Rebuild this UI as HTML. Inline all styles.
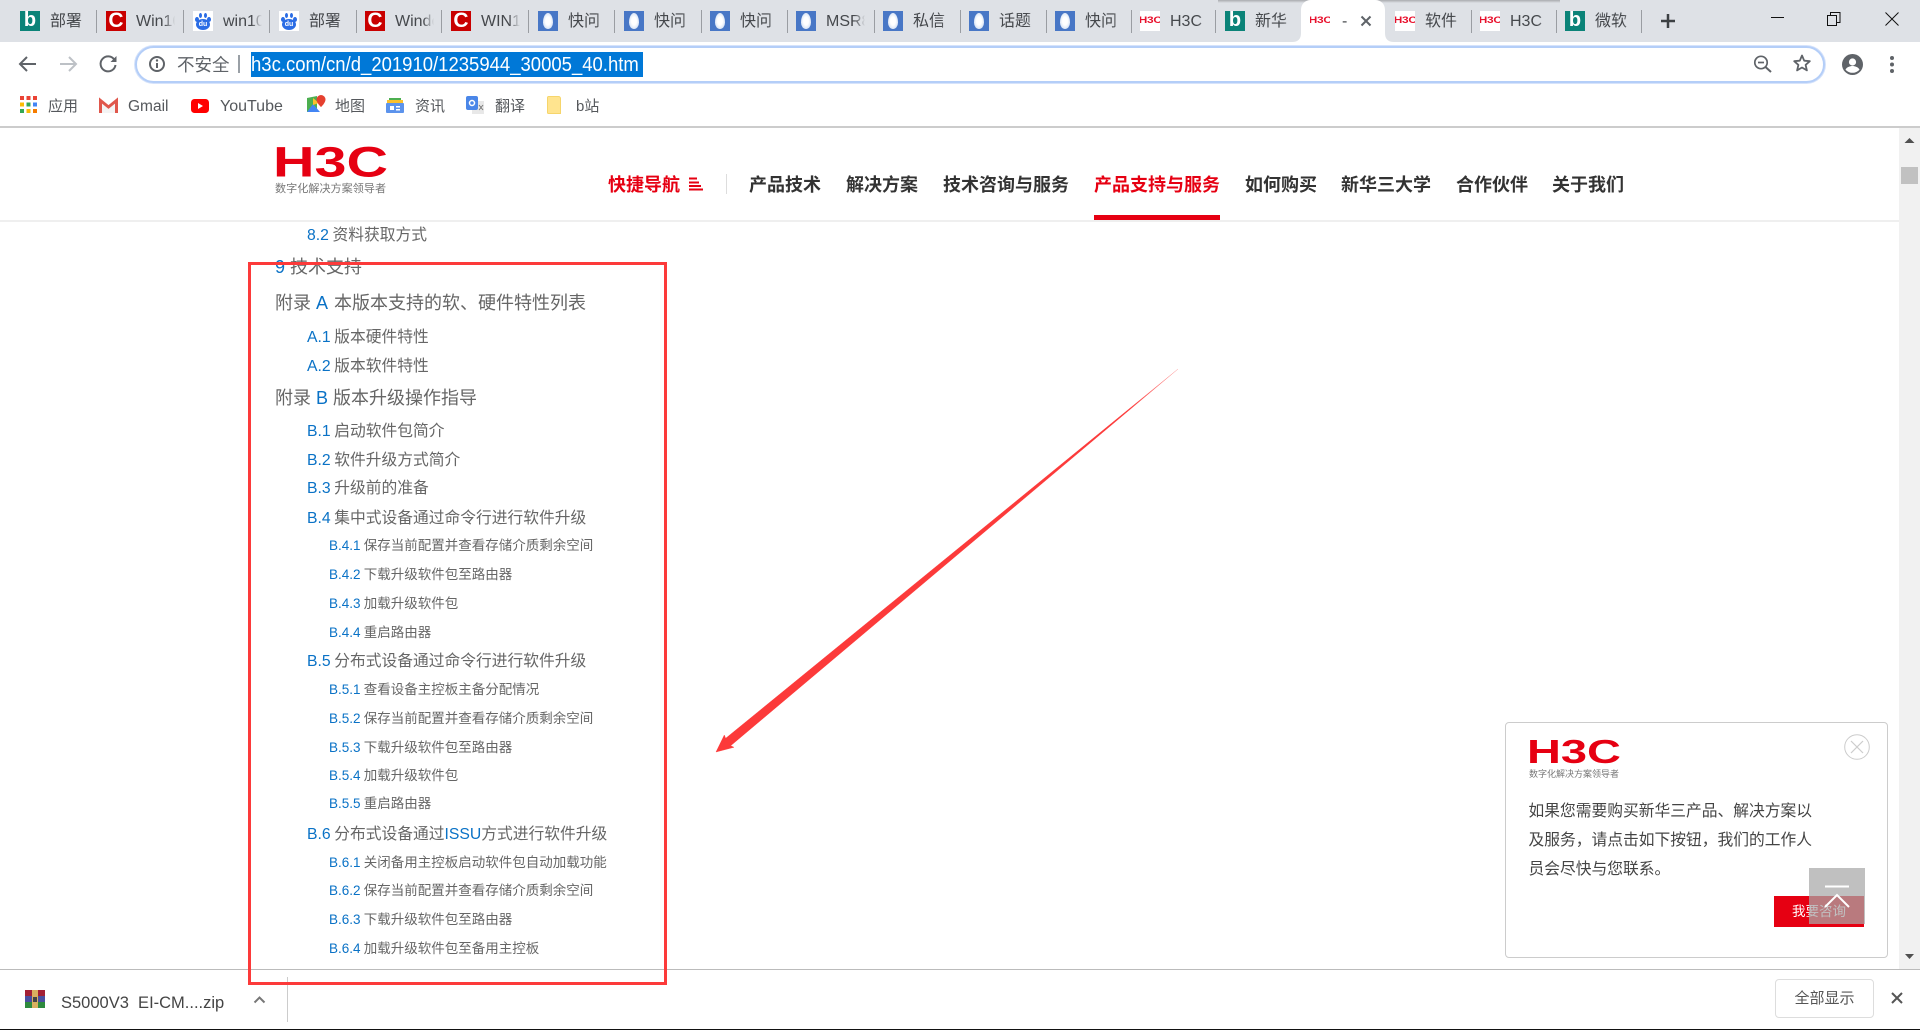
<!DOCTYPE html>
<html lang="zh-CN"><head><meta charset="utf-8"><title>H3C</title>
<style>
html,body{margin:0;padding:0;width:1920px;height:1030px;overflow:hidden;background:#fff}
body{position:relative;font-family:"Liberation Sans","Noto Sans CJK SC",sans-serif;color:#444}
.a,.a *{box-sizing:border-box}
.a{position:absolute;white-space:nowrap}
svg{position:absolute;overflow:visible}
#strip{left:0;top:0;width:1920px;height:42px;background:#dee1e6}
#shadow{left:1218px;top:0;width:342px;height:3px;background:linear-gradient(#a9abaf,#dee1e6)}
.sep{position:absolute;top:10px;width:1px;height:23px;background:#9a9da2}
.tab{position:absolute;top:11px;height:20px;width:70px}
.tab span{position:absolute;left:30px;top:-1px;width:39px;height:24px;line-height:24px;font-size:16px;color:#45484c;overflow:hidden;-webkit-mask-image:linear-gradient(to right,#000 72%,transparent 100%);mask-image:linear-gradient(to right,#000 72%,transparent 100%)}
.f{position:absolute;left:0;top:0;width:20px;height:20px;display:block;overflow:hidden;font-style:normal;text-align:center}
.bing{background:#0b8378;color:#fff;font:bold 20px/19px "Liberation Sans",sans-serif}
.csdn{background:#c90000;color:#fff;font:bold 21px/20px "Liberation Sans",sans-serif}
.baidu{background:#fff}
.baidu b{position:absolute;background:#2b6de5;border-radius:50%}
.baidu em{position:absolute;left:0;right:0;top:10px;font:bold 7px/8px "Liberation Sans",sans-serif;color:#fff;text-align:center;z-index:1}
.drop{background:#4877c6}
.drop b{position:absolute;left:5px;top:2px;width:10px;height:16px;border-radius:50% 50% 50% 50%/60% 60% 40% 40%;background:radial-gradient(#fff 35%,#bcd0ee 100%)}
.h3c{background:#fff;color:#e8112d;font:bold 9.5px/20px "Liberation Sans",sans-serif;letter-spacing:-.2px}
.h3c u{text-decoration:none;display:inline-block;transform:scaleX(1.25)}
#tool{left:0;top:42px;width:1920px;height:85px;background:#fff}
#line1{left:0;top:126px;width:1920px;height:2px;background:#ccc}
#omni{left:135px;top:46px;width:1690px;height:37px;border:2px solid #b4cef8;border-radius:19px;background:#fff;box-shadow:0 0 0 1px #d6e3fb}
.tx{position:absolute;white-space:nowrap}
.bm{position:absolute;top:95px;height:24px;line-height:24px;font-size:15px;color:#55585c;white-space:nowrap}
.nav{position:absolute;top:172px;height:26px;line-height:26px;font-size:18px;font-weight:bold;color:#333;white-space:nowrap}
.red{color:#e60012}
.l1,.l2,.l3{position:absolute;white-space:nowrap;height:24px;line-height:24px;color:#666}
.l1 b,.l2 b,.l3 b{font-weight:normal;color:#0a72c6}
.l1{left:275px;font-size:18px}
.l1 b.m{margin-right:2px}
.l2{left:307px;font-size:15.75px;margin-top:2px;word-spacing:-.8px}
.l3{left:329px;font-size:13.5px;margin-top:1px;word-spacing:-.5px}
.l3.x{margin-top:2px}
</style></head><body>

<!-- page -->
<svg style="left:273px;top:140px" width="118" height="60"><text x="0" y="36.500" font-family="Liberation Sans" font-weight="bold" font-size="43" fill="#e60012" textLength="115" lengthAdjust="spacingAndGlyphs">H3C</text></svg>
<div class="tx" style="left:275px;top:183px;font-size:11px;line-height:13px;color:#777;transform-origin:0 0;transform:scaleX(1.01);letter-spacing:0">数字化解决方案领导者</div>

<div class="nav red" style="left:608px">快捷导航</div>
<svg style="left:689px;top:177px" width="15" height="14"><path d="M0 1.500h8M0 5.500h10M0 9h12M0 12.500h14" stroke="#e60012" stroke-width="2" fill="none"/></svg>
<div class="a" style="left:726px;top:174px;width:1px;height:20px;background:#ddd"></div>
<div class="nav" style="left:749px">产品技术</div>
<div class="nav" style="left:846px">解决方案</div>
<div class="nav" style="left:943px">技术咨询与服务</div>
<div class="nav red" style="left:1094px">产品支持与服务</div>
<div class="nav" style="left:1245px">如何购买</div>
<div class="nav" style="left:1341px">新华三大学</div>
<div class="nav" style="left:1456px">合作伙伴</div>
<div class="nav" style="left:1552px">关于我们</div>
<div class="a" style="left:0;top:220px;width:1899px;height:2px;background:#efefef"></div>
<div class="a" style="left:1094px;top:215px;width:126px;height:5px;background:#e60012"></div>

<div class="l2" style="top:222px"><b>8.2 </b>资料获取方式</div>
<div class="l1" style="top:255px"><b>9 </b>技术支持</div>
<div class="l1" style="top:291px">附录 <b class="m">A </b>本版本支持的软、硬件特性列表</div>
<div class="l2" style="top:324px"><b>A.1 </b>版本硬件特性</div>
<div class="l2" style="top:353px"><b>A.2 </b>版本软件特性</div>
<div class="l1" style="top:386px">附录 <b>B </b>版本升级操作指导</div>
<div class="l2" style="top:418px"><b>B.1 </b>启动软件包简介</div>
<div class="l2" style="top:447px"><b>B.2 </b>软件升级方式简介</div>
<div class="l2" style="top:475px"><b>B.3 </b>升级前的准备</div>
<div class="l2" style="top:505px"><b>B.4 </b>集中式设备通过命令行进行软件升级</div>
<div class="l3 x" style="top:532px"><b>B.4.1 </b>保存当前配置并查看存储介质剩余空间</div>
<div class="l3 x" style="top:561px"><b>B.4.2 </b>下载升级软件包至路由器</div>
<div class="l3 x" style="top:590px"><b>B.4.3 </b>加载升级软件包</div>
<div class="l3 x" style="top:619px"><b>B.4.4 </b>重启路由器</div>
<div class="l2" style="top:648px"><b>B.5 </b>分布式设备通过命令行进行软件升级</div>
<div class="l3" style="top:677px"><b>B.5.1 </b>查看设备主控板主备分配情况</div>
<div class="l3" style="top:706px"><b>B.5.2 </b>保存当前配置并查看存储介质剩余空间</div>
<div class="l3" style="top:735px"><b>B.5.3 </b>下载升级软件包至路由器</div>
<div class="l3" style="top:763px"><b>B.5.4 </b>加载升级软件包</div>
<div class="l3" style="top:791px"><b>B.5.5 </b>重启路由器</div>
<div class="l2" style="top:821px"><b>B.6 </b>分布式设备通过<b>ISSU</b>方式进行软件升级</div>
<div class="l3" style="top:850px"><b>B.6.1 </b>关闭备用主控板启动软件包自动加载功能</div>
<div class="l3" style="top:878px"><b>B.6.2 </b>保存当前配置并查看存储介质剩余空间</div>
<div class="l3" style="top:907px"><b>B.6.3 </b>下载升级软件包至路由器</div>
<div class="l3" style="top:936px"><b>B.6.4 </b>加载升级软件包至备用主控板</div>

<!-- scrollbar -->
<div class="a" style="left:1899px;top:128px;width:21px;height:841px;background:#f1f1f1"></div>
<svg style="left:1899px;top:128px" width="21" height="841"><path d="M10.500 10l5 5h-10z" fill="#505050"/><path d="M6 826h9l-4.500 5z" fill="#505050"/></svg>
<div class="a" style="left:1901px;top:167px;width:17px;height:17px;background:#c1c1c1"></div>

<!-- popup -->
<div class="a" style="left:1505px;top:722px;width:383px;height:236px;background:#fff;border:1px solid #ccc;border-radius:4px"></div>
<svg style="left:1527px;top:735px" width="98" height="32"><text x="0" y="28" font-family="Liberation Sans" font-weight="bold" font-size="33.500" fill="#e60012" textLength="94" lengthAdjust="spacingAndGlyphs">H3C</text></svg>
<div class="tx" style="left:1529px;top:768px;font-size:9px;line-height:12px;color:#777">数字化解决方案领导者</div>
<svg style="left:1844px;top:734px" width="26" height="26"><circle cx="13" cy="13" r="12.300" fill="#fff" stroke="#ccc" stroke-width="1"/><path d="M7 7l12 12M19 7L7 19" stroke="#ccc" stroke-width="1.200"/></svg>
<div class="tx" style="left:1528.500px;top:797px;font-size:15.75px;line-height:29px;color:#444">如果您需要购买新华三产品、解决方案以<br>及服务，请点击如下按钮，我们的工作人<br>员会尽快与您联系。</div>
<div class="a" style="left:1774px;top:896px;width:90px;height:31px;background:#e60012;color:#fff;font-size:13.5px;line-height:31px;text-align:center">我要咨询</div>
<div class="a" style="left:1809px;top:868px;width:56px;height:56px;background:rgba(168,168,168,.725)"></div>
<svg style="left:1809px;top:868px" width="56" height="56"><path d="M16 18.500h24" stroke="#fff" stroke-width="2"/><path d="M16 39l12-12 12 12" stroke="#fff" stroke-width="2" fill="none"/></svg>

<!-- download bar -->
<div class="a" style="left:0;top:969px;width:1920px;height:60px;background:#fff;border-top:1px solid #bbb"></div>
<div class="a" style="left:0;top:1029px;width:1920px;height:1px;background:#111"></div>
<div class="a" style="left:25px;top:990px;width:20px;height:18px;overflow:hidden">
  <div class="a" style="left:0;top:0;width:20px;height:6px;background:#a32035"></div>
  <div class="a" style="left:0;top:6px;width:20px;height:6px;background:#4a4fa0"></div>
  <div class="a" style="left:0;top:12px;width:20px;height:6px;background:#2e8a3e"></div>
  <div class="a" style="left:7px;top:0;width:6px;height:18px;background:#d9b060"></div>
  <div class="a" style="left:8px;top:7px;width:4px;height:5px;background:#444"></div>
</div>
<div class="tx" style="left:61px;top:991px;font-size:16.500px;line-height:24px;color:#444">S5000V3&nbsp;&nbsp;EI-CM....zip</div>
<svg style="left:253px;top:995px" width="13" height="9"><path d="M1.500 7.500L6.500 2.500l5 5" stroke="#777" stroke-width="2" fill="none"/></svg>
<div class="a" style="left:287px;top:977px;width:1px;height:45px;background:#ccc"></div>
<div class="a" style="left:1775px;top:979px;width:99px;height:39px;border:1px solid #ddd;border-radius:4px;background:#fff;text-align:center;font-size:15px;line-height:37px;color:#555">全部显示</div>
<svg style="left:1891px;top:992px" width="12" height="12"><path d="M1 1l10 10M11 1L1 11" stroke="#555" stroke-width="2"/></svg>

<!-- annotations -->
<div class="a" style="left:248px;top:262px;width:419px;height:723px;border:3px solid #fc3a3a"></div>
<svg style="left:0;top:0" width="1920" height="1030">
  <defs><linearGradient id="ar" gradientUnits="userSpaceOnUse" x1="1178" y1="369" x2="1130" y2="409"><stop offset="0" stop-color="#fc3a3a" stop-opacity=".35"/><stop offset="1" stop-color="#fc3a3a"/></linearGradient></defs>
  <path d="M1178 369L730.700 745.700 734 747.300 716 752 724.300 735 725.700 738.300z" fill="url(#ar)" stroke="url(#ar)" stroke-width=".4"/>
</svg>

<!-- tab strip -->
<div class="a" id="strip"></div>
<div class="a" id="shadow"></div>
<svg style="left:1290px;top:0" width="106" height="42"><path d="M2 42c6 0 9-3 9-9V10C11 4 15 0 21 0h64c6 0 10 4 10 10v23c0 6 3 9 9 9z" fill="#fff"/></svg>
<i class="sep" style="left:96px"></i><i class="sep" style="left:183px"></i><i class="sep" style="left:269px"></i><i class="sep" style="left:356px"></i><i class="sep" style="left:441px"></i><i class="sep" style="left:528px"></i><i class="sep" style="left:614px"></i><i class="sep" style="left:701px"></i><i class="sep" style="left:787px"></i><i class="sep" style="left:874px"></i><i class="sep" style="left:960px"></i><i class="sep" style="left:1046px"></i><i class="sep" style="left:1131px"></i><i class="sep" style="left:1215px"></i><i class="sep" style="left:1471px"></i><i class="sep" style="left:1556px"></i><i class="sep" style="left:1641px"></i>

<div class="tab" style="left:20px"><i class="f bing">b</i><span>部署H3C</span></div>
<div class="tab" style="left:106px"><i class="f csdn">C</i><span>Win10</span></div>
<div class="tab" style="left:193px"><i class="f baidu"><b style="left:2px;top:6px;width:4px;height:5px"></b><b style="left:6px;top:2px;width:3px;height:5px"></b><b style="left:11px;top:2px;width:3px;height:5px"></b><b style="left:14px;top:6px;width:4px;height:5px"></b><b style="left:3px;top:8px;width:14px;height:11px"></b><em>du</em></i><span>win10</span></div>
<div class="tab" style="left:279px"><i class="f baidu"><b style="left:2px;top:6px;width:4px;height:5px"></b><b style="left:6px;top:2px;width:3px;height:5px"></b><b style="left:11px;top:2px;width:3px;height:5px"></b><b style="left:14px;top:6px;width:4px;height:5px"></b><b style="left:3px;top:8px;width:14px;height:11px"></b><em>du</em></i><span>部署H3C</span></div>
<div class="tab" style="left:365px"><i class="f csdn">C</i><span>Windows</span></div>
<div class="tab" style="left:451px"><i class="f csdn">C</i><span>WIN10</span></div>
<div class="tab" style="left:538px"><i class="f drop"><b></b></i><span>快问快答</span></div>
<div class="tab" style="left:624px"><i class="f drop"><b></b></i><span>快问快答</span></div>
<div class="tab" style="left:710px"><i class="f drop"><b></b></i><span>快问快答</span></div>
<div class="tab" style="left:796px"><i class="f drop"><b></b></i><span>MSR8</span></div>
<div class="tab" style="left:883px"><i class="f drop"><b></b></i><span>私信消息</span></div>
<div class="tab" style="left:969px"><i class="f drop"><b></b></i><span>话题广场</span></div>
<div class="tab" style="left:1055px"><i class="f drop"><b></b></i><span>快问快答</span></div>
<div class="tab" style="left:1140px"><i class="f h3c"><u>H3C</u></i><span>H3C服务</span></div>
<div class="tab" style="left:1225px"><i class="f bing">b</i><span>新华三</span></div>
<div class="tab" style="left:1310px"><i class="f h3c"><u>H3C</u></i><span style="left:32px;width:18px">-新</span></div>
<svg style="left:1361px;top:16px" width="10" height="10"><path d="M.5.500l9 9M9.500.500l-9 9" stroke="#5f6368" stroke-width="2"/></svg>
<div class="tab" style="left:1395px"><i class="f h3c"><u>H3C</u></i><span>软件升级</span></div>
<div class="tab" style="left:1480px"><i class="f h3c"><u>H3C</u></i><span>H3C</span></div>
<div class="tab" style="left:1565px"><i class="f bing">b</i><span>微软</span></div>
<svg style="left:1661px;top:14px" width="14" height="14"><path d="M7 0v14M0 7h14" stroke="#3c4043" stroke-width="2.500"/></svg>
<svg style="left:1771px;top:12px" width="130" height="14"><path d="M0 5.500h13" stroke="#111" stroke-width="1"/><path d="M56.500 3.500h9v10h-9zM59.500 3.500v-3h9.500v10h-3.500" stroke="#111" stroke-width="1" fill="none"/><path d="M114.500.5l13 13M127.500.5l-13 13" stroke="#111" stroke-width="1"/></svg>

<!-- toolbar -->
<div class="a" id="tool"></div>
<div class="a" id="line1"></div>
<svg style="left:18px;top:55px" width="100" height="18"><path d="M18 9H2M9 2L2 9l7 7" stroke="#5f6368" stroke-width="2" fill="none"/><path d="M42 9h16M51 2l7 7-7 7" stroke="#bdc1c6" stroke-width="2" fill="none"/><path d="M96.500 5A7.500 7.500 0 1 0 97.500 10" stroke="#5f6368" stroke-width="2" fill="none"/><path d="M98.500 1v6h-6z" fill="#5f6368"/></svg>
<div class="a" id="omni"></div>
<svg style="left:149px;top:56px" width="16" height="16"><circle cx="8" cy="8" r="7" stroke="#5f6368" stroke-width="2" fill="none"/><path d="M8 7v5" stroke="#5f6368" stroke-width="2"/><circle cx="8" cy="4.500" r="1.200" fill="#5f6368"/></svg>
<div class="tx" style="left:177px;top:53px;font-size:17.500px;line-height:24px;color:#5f6368">不安全</div>
<div class="a" style="left:238px;top:55px;width:2px;height:18px;background:#9aa0a6"></div>
<div class="a" style="left:251px;top:52px;width:392px;height:25px;background:#0078d7;overflow:hidden"><div style="position:absolute;left:0;top:1px;color:#fff;font-size:20px;line-height:25px;transform-origin:0 50%;transform:scaleX(.925)">h3c.com/cn/d_201910/1235944_30005_40.htm</div></div>
<svg style="left:1754px;top:55px" width="18" height="18"><circle cx="7" cy="7.500" r="6.200" stroke="#5f6368" stroke-width="1.700" fill="none"/><path d="M4 7.500h6" stroke="#5f6368" stroke-width="1.700"/><path d="M11.500 12l5.500 5" stroke="#5f6368" stroke-width="2"/></svg>
<svg style="left:1793px;top:54px" width="18" height="18"><path d="M9 1.500l2.200 5.200 5.600.5-4.200 3.700 1.300 5.500L9 13.500l-4.900 2.900 1.300-5.500L1.200 7.200l5.600-.5z" stroke="#5f6368" stroke-width="1.800" fill="none" stroke-linejoin="round"/></svg>
<svg style="left:1842px;top:54px" width="21" height="21"><circle cx="10.500" cy="10.500" r="10.500" fill="#5f6368"/><circle cx="10.500" cy="8" r="3.600" fill="#fff"/><path d="M3.500 15.500c1.500-2.500 4.500-3.500 7-3.500s5.500 1 7 3.500c-1.500 2-4 3.300-7 3.300s-5.500-1.300-7-3.300z" fill="#fff"/></svg>
<svg style="left:1890px;top:56px" width="4" height="18"><circle cx="2" cy="2" r="2" fill="#5f6368"/><circle cx="2" cy="8.500" r="2" fill="#5f6368"/><circle cx="2" cy="15" r="2" fill="#5f6368"/></svg>

<!-- bookmarks -->
<svg style="left:20px;top:96px" width="17" height="17">
<rect x="0" y="0" width="4" height="4" fill="#ea4335"/><rect x="6.500" y="0" width="4" height="4" fill="#ea4335"/><rect x="13" y="0" width="4" height="4" fill="#ea4335"/>
<rect x="0" y="6.500" width="4" height="4" fill="#fbbc05"/><rect x="6.500" y="6.500" width="4" height="4" fill="#34a853"/><rect x="13" y="6.500" width="4" height="4" fill="#4285f4"/>
<rect x="0" y="13" width="4" height="4" fill="#34a853"/><rect x="6.500" y="13" width="4" height="4" fill="#fbbc05"/><rect x="13" y="13" width="4" height="4" fill="#f57c00"/></svg>
<div class="bm" style="left:48px">应用</div>
<svg style="left:99px;top:99px" width="19" height="14"><path d="M1 14V1l8.500 7L18 1v13" fill="#f4f4f4"/><path d="M1.500 14V1.500l8 6.500 8-6.500V14" stroke="#e0574c" stroke-width="3" fill="none"/></svg>
<div class="bm" style="left:128px;font-size:15.500px">Gmail</div>
<svg style="left:191px;top:99px" width="18" height="14"><rect width="18" height="14" rx="3.500" fill="#f00"/><path d="M7 4l5 3-5 3z" fill="#fff"/></svg>
<div class="bm" style="left:220px;font-size:16px">YouTube</div>
<svg style="left:307px;top:95px" width="19" height="18"><path d="M0 3l10-2v15l-10 1z" fill="#4caf50"/><path d="M0 17l6-8 7 8z" fill="#4285f4"/><path d="M6 3l6 5-6 2z" fill="#fbc02d"/><path d="M14 0a4.500 4.500 0 0 1 4.500 4.500C18.500 8 14 12 14 12S9.500 8 9.500 4.500A4.500 4.500 0 0 1 14 0z" fill="#e5402f"/></svg>
<div class="bm" style="left:335px">地图</div>
<svg style="left:386px;top:98px" width="18" height="15"><rect x="3" y="0" width="12" height="5" fill="#4caf50"/><rect x="1" y="2" width="16" height="4" fill="#fbc02d"/><rect x="0" y="5" width="18" height="10" rx="1" fill="#5c93ec"/><rect x="4" y="8" width="4" height="4" fill="#fff"/><rect x="10" y="8" width="4" height="1.500" fill="#fff"/><rect x="10" y="11" width="4" height="1.500" fill="#fff"/></svg>
<div class="bm" style="left:415px">资讯</div>
<svg style="left:466px;top:96px" width="18" height="18"><rect x="6" y="5" width="12" height="13" fill="#e8e8e8"/><rect x="0" y="0" width="12" height="14" rx="2" fill="#4a86e8"/><circle cx="6" cy="7" r="2.500" stroke="#fff" stroke-width="1.500" fill="none"/><path d="M13 9l4 5M17 9l-4 5" stroke="#777" stroke-width="1"/></svg>
<div class="bm" style="left:495px">翻译</div>
<svg style="left:547px;top:96px" width="14" height="18"><path d="M1.500.500h10a2 2 0 0 1 2 2v15h-12a1 1 0 0 1-1-1v-15a1 1 0 0 1 1-1z" fill="#ffe48f" stroke="#f6d56b"/></svg>
<div class="bm" style="left:576px">b站</div>
</body></html>
